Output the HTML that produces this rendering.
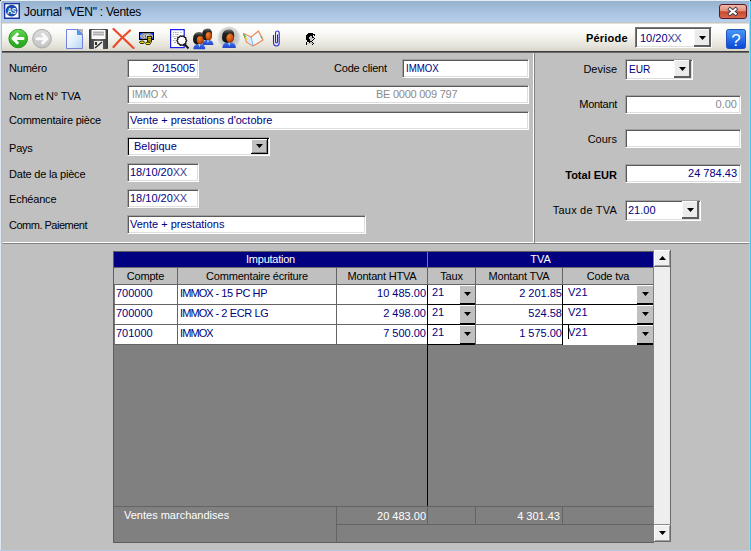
<!DOCTYPE html>
<html><head><meta charset="utf-8">
<style>
*{box-sizing:border-box;margin:0;padding:0}
html,body{width:751px;height:551px;overflow:hidden;background:#c0c0c0;font-family:"Liberation Sans",sans-serif;font-size:11px;color:#000}
.abs{position:absolute}
#win{position:absolute;left:0;top:0;width:751px;height:551px;background:#c0c0c0;overflow:hidden}
.lbl{position:absolute;white-space:nowrap;font-size:11px;line-height:13px;color:#000;letter-spacing:-0.2px}
.inp{position:absolute;background:#fff;border-top:1px solid #a0a0a0;border-left:1px solid #a0a0a0;border-bottom:1px solid #fff;border-right:1px solid #fff;box-shadow:inset 1px 1px 0 #5a5a5a,inset -1px -1px 0 #dedede;color:#000080;white-space:nowrap;overflow:hidden;font-size:11px;line-height:13px;padding:2px 3px 0 3px}
.inp span{position:relative}
.r{text-align:right}
.dis{color:#8a8a8a}
.cbd{position:absolute;background:#c0c0c0;border-right:1px solid #000;border-bottom:1px solid #000;box-shadow:inset 1px 1px 0 #fff,inset -1px -1px 0 #808080}
.cbl{position:absolute;background:#ebebeb;border-right:2px solid #5f5f5f;border-bottom:2px solid #5f5f5f;box-shadow:inset 1px 1px 0 #fafafa}
.arr{position:absolute;width:7px;height:4px;background:#000;clip-path:polygon(0 0,100% 0,50% 100%)}
.arrup{position:absolute;width:7px;height:4px;background:#000;clip-path:polygon(50% 0,100% 100%,0 100%)}
.cell{position:absolute;white-space:nowrap;overflow:hidden;font-size:11px;line-height:13px}
.sbtn{position:absolute;background:#f0f0f0;border-right:1px solid #6a6a6a;border-bottom:1px solid #6a6a6a;box-shadow:inset 1px 1px 0 #fff,inset -1px -1px 0 #a0a0a0}
</style></head><body>
<div id="win">
<div class="abs" style="left:0px;top:0px;width:751px;height:22px;background:linear-gradient(#94b0cc,#a8c2e0 55%,#b8d0ee);"></div>
<svg class="abs" style="left:4px;top:3px" width="16" height="16" viewBox="0 0 16 16">
  <rect x="0" y="0" width="16" height="16" fill="#1c34a4"/>
  <rect x="1.3" y="1.3" width="13.2" height="13.2" fill="#fff"/>
  <circle cx="7.6" cy="7.7" r="5.9" fill="#1a4aac"/>
  <g transform="translate(7.6,11) scale(0.72,1)"><text x="0" y="0" text-anchor="middle" font-size="9.5" font-family="Liberation Sans" font-weight="bold" fill="#fff" letter-spacing="-0.5">AS</text></g>
</svg>
<div class="abs" style="left:24px;top:5px;font-size:12px;line-height:14px;color:#000;white-space:nowrap;letter-spacing:-0.25px">Journal "VEN" : Ventes</div>
<div class="abs" style="left:719px;top:4px;width:28px;height:15px;border:1px solid #5a1820;border-radius:3px;background:linear-gradient(#f0b8a8,#e4907c 45%,#c8472c 52%,#d86a50)"></div>
<svg class="abs" style="left:726px;top:6px" width="14" height="11" viewBox="0 0 14 11"><path d="M4 3.2 L9.6 7.8 M9.6 3.2 L4 7.8" stroke="#3a3a4a" stroke-width="3.8" stroke-linecap="square"/><path d="M4 3.2 L9.6 7.8 M9.6 3.2 L4 7.8" stroke="#fff" stroke-width="2.1" stroke-linecap="square"/></svg>
<div class="abs" style="left:0px;top:22px;width:751px;height:1px;background:#c4c4c0;"></div>
<div class="abs" style="left:0px;top:23px;width:751px;height:1px;background:#e0e0dc;"></div>
<div class="abs" style="left:0px;top:24px;width:751px;height:27px;background:linear-gradient(#ffffff,#fbfbf8 30%,#e6e4da 80%,#d8d5ca);"></div>
<div class="abs" style="left:0px;top:51px;width:751px;height:1px;background:#3e3e3e;"></div>
<div class="abs" style="left:0px;top:52px;width:751px;height:1px;background:#6a6a6a;"></div>
<div class="abs" style="left:0px;top:0px;width:1px;height:551px;background:#dfe8f2;"></div>
<div class="abs" style="left:1px;top:0px;width:1px;height:551px;background:#a9c0da;"></div>
<div class="abs" style="left:749px;top:0px;width:1px;height:551px;background:#b9cde6;"></div>
<div class="abs" style="left:750px;top:0px;width:1px;height:551px;background:#3cc6ef;"></div>
<div class="abs" style="left:0px;top:550px;width:751px;height:1px;background:#b4cbe6;"></div>
<div class="abs" style="left:0px;top:0px;width:751px;height:1px;background:#e4ecf5;"></div>
<div class="abs" style="left:0px;top:0px;width:1px;height:1px;background:#303030;"></div>
<div class="abs" style="left:750px;top:0px;width:1px;height:1px;background:#000;"></div>
  <!-- toolbar icons -->
  <svg class="abs" style="left:8px;top:29px" width="21" height="20" viewBox="0 0 21 20">
    <defs><linearGradient id="gg" x1="0" y1="0" x2="0" y2="1"><stop offset="0" stop-color="#6cd85a"/><stop offset="0.5" stop-color="#3cb82c"/><stop offset="1" stop-color="#2aa020"/></linearGradient></defs>
    <circle cx="10.2" cy="9.5" r="9.3" fill="url(#gg)" stroke="#1b9a1b" stroke-width="1"/>
    <path d="M5 9.5 L9.3 5.2 M5 9.5 L9.3 13.8 M5.5 9.5 L15 9.5" stroke="#fff" stroke-width="3" stroke-linecap="round"/>
  </svg>
  <svg class="abs" style="left:32px;top:29px" width="21" height="20" viewBox="0 0 21 20">
    <defs><linearGradient id="gr" x1="0" y1="0" x2="0" y2="1"><stop offset="0" stop-color="#dcdcdc"/><stop offset="1" stop-color="#c4c4c4"/></linearGradient></defs>
    <circle cx="10" cy="9.7" r="9.3" fill="url(#gr)" stroke="#a8a8a8" stroke-width="1"/>
    <path d="M15 9.7 L10.7 5.4 M15 9.7 L10.7 14 M14.5 9.7 L5 9.7" stroke="#fafafa" stroke-width="3" stroke-linecap="round"/>
  </svg>
  <svg class="abs" style="left:66px;top:29px" width="18" height="21" viewBox="0 0 18 21">
    <defs><linearGradient id="dg" x1="0" y1="0" x2="1" y2="1"><stop offset="0" stop-color="#ffffff"/><stop offset="0.5" stop-color="#e4f0fc"/><stop offset="1" stop-color="#b4d4f4"/></linearGradient></defs>
    <rect x="11" y="0" width="6" height="6" fill="#b8b8b8"/>
    <path d="M0.5 0.5 H11.5 L16.5 5.5 V19.5 H0.5 Z" fill="url(#dg)" stroke="#7482dc"/>
    <path d="M11.5 0.5 V5.5 H16.5 Z" fill="#40a0f0" stroke="#7482dc"/>
  </svg>
  <svg class="abs" style="left:89px;top:29px" width="20" height="20" viewBox="0 0 20 20">
    <defs><linearGradient id="fg" x1="0" y1="0" x2="1" y2="0"><stop offset="0" stop-color="#3a3a3a"/><stop offset="0.5" stop-color="#6a6a6a"/><stop offset="1" stop-color="#3a3a3a"/></linearGradient></defs>
    <rect x="0" y="0" width="19" height="20" rx="1" fill="url(#fg)"/>
    <rect x="2.5" y="1" width="14" height="9" fill="#fafafa"/>
    <rect x="4" y="2.5" width="11" height="4" fill="#b0b0b0"/>
    <rect x="4" y="4" width="11" height="1" fill="#d0d0d0"/>
    <rect x="5" y="12" width="9" height="8" fill="#e8e8e8"/>
    <path d="M6 19 L13 13" stroke="#202020" stroke-width="1.2"/>
    <rect x="6" y="13" width="2" height="3" fill="#303030"/>
  </svg>
  <svg class="abs" style="left:112px;top:28px" width="23" height="21" viewBox="0 0 23 21">
    <path d="M1.5 1 Q10 9 21.5 20" stroke="#ea4a2a" stroke-width="2.2" fill="none" stroke-linecap="round"/>
    <path d="M18 2.5 Q9 10 1.5 19" stroke="#ea4a2a" stroke-width="2.2" fill="none" stroke-linecap="round"/>
  </svg>
  <svg class="abs" style="left:139px;top:32px" width="15" height="13" viewBox="0 0 15 13">
    <rect x="0.5" y="0.5" width="14" height="7" fill="#b0b0b0" stroke="#000"/>
    <path d="M1 1 h3.5 l-3.5 2.5z M14 1 h-3.5 l3.5 2.5z M1 7 h2.5 l-2.5 -2z M14 7 h-2.5 l2.5 -2z" fill="#1848ff"/>
    <ellipse cx="7.5" cy="4" rx="4" ry="2.6" fill="#cfcfcf" stroke="#606060" stroke-width="0.7"/>
    <path d="M7 2.5 Q5 4 7 5.5" stroke="#303030" stroke-width="0.8" fill="none"/>
    <rect x="8.5" y="4.5" width="4" height="5.5" fill="#f4e400" stroke="#000" stroke-width="0.8"/>
    <path d="M8.5 6.3 h4 M8.5 8.2 h4" stroke="#000" stroke-width="0.6"/>
    <ellipse cx="3" cy="10.3" rx="2.5" ry="1.3" fill="#f4e400" stroke="#000" stroke-width="0.8"/>
    <ellipse cx="9" cy="11.4" rx="2.5" ry="1.3" fill="#f4e400" stroke="#000" stroke-width="0.8"/>
  </svg>
  <svg class="abs" style="left:169px;top:29px" width="22" height="21" viewBox="0 0 22 21">
    <rect x="1.6" y="0.6" width="13.6" height="18" fill="#fff" stroke="#1c1cf0" stroke-width="1.2"/>
    <path d="M4 3.5h1 M6 3.5h1.5 M8.5 3.5h1 M11.5 3.5h1 M3.8 5.5h1 M6.5 5.5h1 M8 5.5h1.5 M3.8 7.5h1 M5.5 7.5h1 M7.5 7.5h1.5 M5 9.5h2.5 M3.8 11.5h1 M5.5 11.5h1 M5 13.5h2" stroke="#909090" stroke-width="0.9"/>
    <path d="M15 14.5 L19.5 19.5" stroke="#181818" stroke-width="1.9"/>
    <polygon points="17.70,11.60 16.79,12.90 16.76,14.48 15.27,15.00 14.31,16.26 12.80,15.80 11.29,16.26 10.33,15.00 8.84,14.48 8.81,12.90 7.90,11.60 8.81,10.30 8.84,8.72 10.33,8.20 11.29,6.94 12.80,7.40 14.31,6.94 15.27,8.20 16.76,8.72 16.79,10.30" fill="#fff" stroke="#111" stroke-width="1.3" stroke-linejoin="round"/>
  </svg>
  <svg class="abs" style="left:188px;top:25px" width="78" height="27" viewBox="188 25 78 27">
    <defs>
      <linearGradient id="bd" x1="0" y1="0" x2="0" y2="1"><stop offset="0" stop-color="#5a84ec"/><stop offset="0.5" stop-color="#3058e0"/><stop offset="1" stop-color="#2446c8"/></linearGradient>
      <radialGradient id="fc" cx="0.35" cy="0.3" r="0.8"><stop offset="0" stop-color="#f48030"/><stop offset="0.6" stop-color="#c85210"/><stop offset="1" stop-color="#882c04"/></radialGradient>
      <linearGradient id="hr" x1="0" y1="0" x2="0" y2="1"><stop offset="0" stop-color="#707070"/><stop offset="0.3" stop-color="#222"/><stop offset="1" stop-color="#101010"/></linearGradient>
      <radialGradient id="glow" cx="0.5" cy="0.5" r="0.5"><stop offset="0" stop-color="#b4b4b4"/><stop offset="0.7" stop-color="#c8c8c6"/><stop offset="0.9" stop-color="#dcdcd8"/><stop offset="1" stop-color="#eeede8" stop-opacity="0"/></radialGradient>
      
    </defs>
    <g transform="translate(202,28.4) scale(0.93,0.97)">
        <path d="M0.3 17.2 Q0.3 12 6.3 11.6 Q12.3 12 12.3 17.2 Z" fill="url(#bd)"/>
        <path d="M5.3 11.8 L6.4 15.5 L7.5 11.8 Z" fill="#a8e4fa"/>
        <path d="M0 7.5 Q0 0 6 0 Q10.8 0 10.8 5.5 L10.5 9 Q8 12.5 3.5 12.3 Q0 11.5 0 7.5 Z" fill="url(#hr)"/>
        <ellipse cx="7.2" cy="8" rx="3.4" ry="4.2" fill="url(#fc)"/>
      </g>
    <g transform="translate(193,32.1)">
        <path d="M0.3 17.2 Q0.3 12 6.3 11.6 Q12.3 12 12.3 17.2 Z" fill="url(#bd)"/>
        <path d="M5.3 11.8 L6.4 15.5 L7.5 11.8 Z" fill="#a8e4fa"/>
        <path d="M0 7.5 Q0 0 6 0 Q10.8 0 10.8 5.5 L10.5 9 Q8 12.5 3.5 12.3 Q0 11.5 0 7.5 Z" fill="url(#hr)"/>
        <ellipse cx="7.2" cy="8" rx="3.4" ry="4.2" fill="url(#fc)"/>
      </g>
    <circle cx="229" cy="38" r="12" fill="url(#glow)"/>
    <g transform="translate(222,29.5) scale(1.13,1.08)">
        <path d="M0.3 17.2 Q0.3 12 6.3 11.6 Q12.3 12 12.3 17.2 Z" fill="url(#bd)"/>
        <path d="M5.3 11.8 L6.4 15.5 L7.5 11.8 Z" fill="#a8e4fa"/>
        <path d="M0 7.5 Q0 0 6 0 Q10.8 0 10.8 5.5 L10.5 9 Q8 12.5 3.5 12.3 Q0 11.5 0 7.5 Z" fill="url(#hr)"/>
        <ellipse cx="7.2" cy="8" rx="3.4" ry="4.2" fill="url(#fc)"/>
      </g>
    <path d="M243.5 33.5 L251 37 L258.5 31 L263 40 L253 46 L246.5 42 Z" fill="#eef6fe" stroke="#f08a5a" stroke-width="1.3" stroke-linejoin="round"/>
    <path d="M251 37 L253 46" stroke="#78b0ec" stroke-width="1.2"/>
    <path d="M245 35.5 L251 38.5 L252.5 45 L247 41.5 Z" fill="#d4eafc"/>
    <path d="M244 34.5 L245.5 37.5" stroke="#40c040" stroke-width="1.6"/>
    <path d="M245.5 37.5 L246.5 40" stroke="#f0d020" stroke-width="1.6"/>
    <path d="M261 36 L262 38.5" stroke="#60c050" stroke-width="1.4"/>
  </svg>
  <svg class="abs" style="left:272px;top:30px" width="9" height="17" viewBox="0 0 9 17">
    <path d="M5.5 4.5 V11.5 Q5.5 13 4.5 13 Q3.5 13 3.5 11.5 V3 Q3.5 1 5.2 1 Q7.2 1 7.2 3 V12.5 Q7.2 16 4.5 16 Q1.5 16 1.5 12.5 V5" fill="none" stroke="#2424e0" stroke-width="1.1"/>
  </svg>
  <svg class="abs" style="left:306px;top:33px" width="9" height="12" viewBox="306 33 9 12" shape-rendering="crispEdges"><rect x="308" y="33" width="1" height="1" fill="#000"/><rect x="309" y="33" width="1" height="1" fill="#000"/><rect x="310" y="33" width="1" height="1" fill="#000"/><rect x="311" y="33" width="1" height="1" fill="#000"/><rect x="312" y="33" width="1" height="1" fill="#000"/><rect x="307" y="34" width="1" height="1" fill="#000"/><rect x="308" y="34" width="1" height="1" fill="#000"/><rect x="309" y="34" width="1" height="1" fill="#000"/><rect x="310" y="34" width="1" height="1" fill="#000"/><rect x="311" y="34" width="1" height="1" fill="#000"/><rect x="312" y="34" width="1" height="1" fill="#000"/><rect x="313" y="34" width="1" height="1" fill="#000"/><rect x="314" y="34" width="1" height="1" fill="#000"/><rect x="306" y="35" width="1" height="1" fill="#000"/><rect x="307" y="35" width="1" height="1" fill="#000"/><rect x="308" y="35" width="1" height="1" fill="#000"/><rect x="309" y="35" width="1" height="1" fill="#000"/><rect x="310" y="35" width="1" height="1" fill="#000"/><rect x="311" y="35" width="1" height="1" fill="#000"/><rect x="312" y="35" width="1" height="1" fill="#000"/><rect x="313" y="35" width="1" height="1" fill="#fff"/><rect x="314" y="35" width="1" height="1" fill="#000"/><rect x="306" y="36" width="1" height="1" fill="#000"/><rect x="307" y="36" width="1" height="1" fill="#000"/><rect x="308" y="36" width="1" height="1" fill="#000"/><rect x="309" y="36" width="1" height="1" fill="#000"/><rect x="310" y="36" width="1" height="1" fill="#c8c8c8"/><rect x="311" y="36" width="1" height="1" fill="#c8c8c8"/><rect x="312" y="36" width="1" height="1" fill="#000"/><rect x="306" y="37" width="1" height="1" fill="#000"/><rect x="307" y="37" width="1" height="1" fill="#000"/><rect x="308" y="37" width="1" height="1" fill="#000"/><rect x="309" y="37" width="1" height="1" fill="#c8c8c8"/><rect x="310" y="37" width="1" height="1" fill="#c8c8c8"/><rect x="311" y="37" width="1" height="1" fill="#c8c8c8"/><rect x="312" y="37" width="1" height="1" fill="#000"/><rect x="313" y="37" width="1" height="1" fill="#000"/><rect x="306" y="38" width="1" height="1" fill="#000"/><rect x="307" y="38" width="1" height="1" fill="#000"/><rect x="308" y="38" width="1" height="1" fill="#000"/><rect x="309" y="38" width="1" height="1" fill="#c8c8c8"/><rect x="310" y="38" width="1" height="1" fill="#c8c8c8"/><rect x="311" y="38" width="1" height="1" fill="#c8c8c8"/><rect x="312" y="38" width="1" height="1" fill="#c8c8c8"/><rect x="314" y="38" width="1" height="1" fill="#000"/><rect x="306" y="39" width="1" height="1" fill="#000"/><rect x="307" y="39" width="1" height="1" fill="#000"/><rect x="308" y="39" width="1" height="1" fill="#000"/><rect x="309" y="39" width="1" height="1" fill="#000"/><rect x="310" y="39" width="1" height="1" fill="#c8c8c8"/><rect x="311" y="39" width="1" height="1" fill="#c8c8c8"/><rect x="313" y="39" width="1" height="1" fill="#000"/><rect x="307" y="40" width="1" height="1" fill="#000"/><rect x="308" y="40" width="1" height="1" fill="#000"/><rect x="309" y="40" width="1" height="1" fill="#000"/><rect x="310" y="40" width="1" height="1" fill="#c8c8c8"/><rect x="311" y="40" width="1" height="1" fill="#c8c8c8"/><rect x="312" y="40" width="1" height="1" fill="#000"/><rect x="307" y="41" width="1" height="1" fill="#000"/><rect x="308" y="41" width="1" height="1" fill="#000"/><rect x="309" y="41" width="1" height="1" fill="#000"/><rect x="310" y="41" width="1" height="1" fill="#000"/><rect x="311" y="41" width="1" height="1" fill="#000"/><rect x="306" y="42" width="1" height="1" fill="#000"/><rect x="309" y="42" width="1" height="1" fill="#000"/><rect x="310" y="42" width="1" height="1" fill="#c8c8c8"/><rect x="311" y="42" width="1" height="1" fill="#c8c8c8"/><rect x="312" y="42" width="1" height="1" fill="#000"/><rect x="306" y="43" width="1" height="1" fill="#000"/><rect x="307" y="43" width="1" height="1" fill="#c8c8c8"/><rect x="308" y="43" width="1" height="1" fill="#c8c8c8"/><rect x="309" y="43" width="1" height="1" fill="#c8c8c8"/><rect x="310" y="43" width="1" height="1" fill="#c8c8c8"/><rect x="311" y="43" width="1" height="1" fill="#c8c8c8"/><rect x="312" y="43" width="1" height="1" fill="#c8c8c8"/><rect x="313" y="43" width="1" height="1" fill="#000"/><rect x="306" y="44" width="1" height="1" fill="#000"/><rect x="312" y="44" width="1" height="1" fill="#000"/></svg>
<div class="lbl" style="left:586px;top:32px;font-weight:bold;letter-spacing:0.2px">Période</div>
<div class="inp " style="left:635px;top:27px;width:77px;height:21px;padding-top:4px;padding-left:4px;border-top-color:#787878;border-left-color:#787878"><span style="">10/20<span style="color:#40409a;letter-spacing:-0.6px">XX</span></span></div>
<div class="cbl" style="left:694px;top:29px;width:17px;height:18px"><div class="arr" style="left:5px;top:7px"></div></div>
<svg class="abs" style="left:726px;top:29px" width="20" height="20" viewBox="0 0 20 20">
  <defs><linearGradient id="hg" x1="0" y1="0" x2="0" y2="1"><stop offset="0" stop-color="#4a98fa"/><stop offset="1" stop-color="#0648d6"/></linearGradient></defs>
  <rect x="0.5" y="0.5" width="19" height="19" rx="2" fill="url(#hg)" stroke="#2050b8"/>
  <text x="10" y="16.5" text-anchor="middle" font-size="17" font-family="Liberation Sans" fill="#fff">?</text>
</svg>
<div class="lbl" style="left:9px;top:62px;">Numéro</div>
<div class="inp r" style="left:127px;top:59px;width:72px;height:19px;"><span style="">2015005</span></div>
<div class="lbl" style="left:334px;top:62px;">Code client</div>
<div class="inp " style="left:402px;top:59px;width:127px;height:19px;padding-left:3px"><span style=""><span style="display:inline-block;transform:scaleX(0.88);transform-origin:0 0">IMMOX</span></span></div>
<div class="lbl" style="left:9px;top:90px;">Nom et N° TVA</div>
<div class="inp dis" style="left:127px;top:85px;width:402px;height:19px"><span style="display:inline-block;transform:scaleX(0.88);transform-origin:0 0;left:1px">IMMO X</span><span style="position:absolute;left:248px;top:2px;letter-spacing:-0.25px">BE 0000 009 797</span></div>
<div class="lbl" style="left:9px;top:114px;">Commentaire pièce</div>
<div class="inp " style="left:127px;top:111px;width:402px;height:19px;padding-left:2px"><span style="">Vente + prestations d'octobre</span></div>
<div class="lbl" style="left:9px;top:142px;">Pays</div>
<div class="inp" style="left:127px;top:137px;width:143px;height:19px;box-shadow:inset 1px 1px 0 #000,inset -1px -1px 0 #dedede;padding-left:6px;padding-top:2px">Belgique</div>
<div class="cbd" style="left:251px;top:139px;width:17px;height:15px"><div class="arr" style="left:5px;top:5px"></div></div>
<div class="lbl" style="left:9px;top:168px;">Date de la pièce</div>
<div class="inp " style="left:127px;top:163px;width:72px;height:19px;padding-left:2px;padding-top:2px"><span style="">18/10/20<span style="color:#40409a;letter-spacing:-0.3px">XX</span></span></div>
<div class="lbl" style="left:9px;top:193px;">Echéance</div>
<div class="inp " style="left:127px;top:189px;width:72px;height:19px;padding-left:2px;padding-top:2px"><span style="">18/10/20<span style="color:#40409a;letter-spacing:-0.3px">XX</span></span></div>
<div class="lbl" style="left:9px;top:219px;letter-spacing:-0.5px">Comm. Paiement</div>
<div class="inp " style="left:127px;top:215px;width:239px;height:19px;padding-left:2px;padding-top:2px"><span style="">Vente + prestations</span></div>
<div class="abs" style="left:533px;top:53px;width:1px;height:190px;background:#fff;"></div>
<div class="abs" style="left:534px;top:53px;width:1px;height:190px;background:#808080;"></div>
<div class="abs" style="left:3px;top:242px;width:530px;height:1px;background:#fff;"></div>
<div class="abs" style="left:535px;top:242px;width:214px;height:1px;background:#fff;"></div>
<div class="abs" style="left:3px;top:243px;width:746px;height:1px;background:#808080;"></div>
<div class="lbl" style="left:0px;top:63px;width:617px;text-align:right;letter-spacing:0">Devise</div>
<div class="inp " style="left:625px;top:59px;width:68px;height:21px;padding-top:3px;padding-left:3px"><span style=""><span style="display:inline-block;transform:scaleX(0.92);transform-origin:0 0">EUR</span></span></div>
<div class="cbl" style="left:674px;top:60px;width:17px;height:18px"><div class="arr" style="left:5px;top:7px"></div></div>
<div class="lbl" style="left:0px;top:98px;width:617px;text-align:right;letter-spacing:-0.3px">Montant</div>
<div class="inp r dis" style="left:625px;top:95px;width:116px;height:19px;padding-right:3px;padding-top:2px"><span style="">0.00</span></div>
<div class="lbl" style="left:0px;top:133px;width:617px;text-align:right;letter-spacing:0">Cours</div>
<div class="inp " style="left:625px;top:129px;width:116px;height:19px;"><span style=""></span></div>
<div class="lbl" style="left:0px;top:169px;width:617px;text-align:right;font-weight:bold;letter-spacing:0">Total EUR</div>
<div class="inp r" style="left:625px;top:164px;width:116px;height:19px;padding-right:3px;padding-top:2px"><span style="">24 784.43</span></div>
<div class="lbl" style="left:0px;top:204px;width:617px;text-align:right;letter-spacing:0.2px">Taux de TVA</div>
<div class="inp " style="left:625px;top:200px;width:76px;height:21px;padding-top:3px;padding-left:2px"><span style="">21.00</span></div>
<div class="cbl" style="left:682px;top:201px;width:17px;height:18px"><div class="arr" style="left:5px;top:7px"></div></div>
<div class="abs" style="left:113px;top:251px;width:541px;height:292px;background:#808080;border-top:1px solid #5e5e5e;border-left:1px solid #5e5e5e;border-bottom:1px solid #5e5e5e"></div>
<div class="abs" style="left:114px;top:252px;width:313px;height:15px;background:#000080;color:#fff;text-align:center;line-height:14px;letter-spacing:-0.25px">Imputation</div>
<div class="abs" style="left:427px;top:252px;width:1px;height:15px;background:#7a7a7a;"></div>
<div class="abs" style="left:428px;top:252px;width:225px;height:15px;background:#000080;color:#fff;text-align:center;line-height:14px">TVA</div>
<div class="abs" style="left:114px;top:267px;width:539px;height:1px;background:#686868;"></div>
<div class="abs" style="left:114px;top:268px;width:539px;height:16px;background:#c0c0c0;"></div>
<div class="abs" style="left:114px;top:284px;width:539px;height:1px;background:#646464;"></div>
<div class="cell" style="left:114px;top:270px;width:63px;text-align:center;letter-spacing:-0.2px">Compte</div>
<div class="cell" style="left:178px;top:270px;width:158px;text-align:center;letter-spacing:-0.2px">Commentaire écriture</div>
<div class="cell" style="left:337px;top:270px;width:90px;text-align:center;letter-spacing:-0.2px">Montant HTVA</div>
<div class="cell" style="left:428px;top:270px;width:47px;text-align:center;letter-spacing:-0.2px">Taux</div>
<div class="cell" style="left:476px;top:270px;width:86px;text-align:center;letter-spacing:-0.2px">Montant TVA</div>
<div class="cell" style="left:563px;top:270px;width:90px;text-align:center;letter-spacing:-0.2px">Code tva</div>
<div class="abs" style="left:177px;top:267px;width:1px;height:17px;background:#646464;"></div>
<div class="abs" style="left:336px;top:267px;width:1px;height:17px;background:#646464;"></div>
<div class="abs" style="left:427px;top:267px;width:1px;height:17px;background:#646464;"></div>
<div class="abs" style="left:475px;top:267px;width:1px;height:17px;background:#646464;"></div>
<div class="abs" style="left:562px;top:267px;width:1px;height:17px;background:#646464;"></div>
<div class="abs" style="left:114px;top:285px;width:539px;height:60px;background:#fff;"></div>
<div class="abs" style="left:114px;top:285px;width:1px;height:60px;background:#7a7a7a;"></div>
<div class="cell" style="left:116px;top:287px;color:#000080">700000</div>
<div class="cell" style="left:180px;top:287px;color:#000080"><span style="letter-spacing:-0.9px">IMMOX</span><span style="letter-spacing:-0.4px"> - 15 PC HP</span></div>
<div class="cell" style="left:337px;top:287px;width:89px;text-align:right;color:#000080">10 485.00</div>
<div class="cell" style="left:432px;top:286px;color:#000080">21</div>
<div class="cell" style="left:476px;top:287px;width:86px;text-align:right;color:#000080">2 201.85</div>
<div class="cell" style="left:568px;top:286px;color:#000080">V21</div>
<div class="abs" style="left:114px;top:304px;width:314px;height:1px;background:#646464;"></div>
<div class="abs" style="left:476px;top:304px;width:87px;height:1px;background:#646464;"></div>
<div class="abs" style="left:459px;top:285px;width:1px;height:18px;background:#fff;"></div>
<div class="abs" style="left:460px;top:285px;width:15px;height:1px;background:#fff;"></div>
<div class="abs" style="left:460px;top:286px;width:15px;height:17px;background:#c0c0c0;"></div>
<div class="arr" style="left:464px;top:292px"></div>
<div class="abs" style="left:428px;top:304px;width:48px;height:1px;background:#000;"></div>
<div class="abs" style="left:460px;top:303px;width:16px;height:1px;background:#000;"></div>
<div class="abs" style="left:475px;top:285px;width:1px;height:20px;background:#000;"></div>
<div class="abs" style="left:636px;top:285px;width:1px;height:18px;background:#fff;"></div>
<div class="abs" style="left:637px;top:285px;width:16px;height:1px;background:#fff;"></div>
<div class="abs" style="left:637px;top:286px;width:16px;height:17px;background:#c0c0c0;"></div>
<div class="arr" style="left:642px;top:292px"></div>
<div class="abs" style="left:637px;top:303px;width:16px;height:2px;background:#000;"></div>
<div class="cell" style="left:116px;top:307px;color:#000080">700000</div>
<div class="cell" style="left:180px;top:307px;color:#000080"><span style="letter-spacing:-0.9px">IMMOX</span><span style="letter-spacing:-0.4px"> - 2 ECR LG</span></div>
<div class="cell" style="left:337px;top:307px;width:89px;text-align:right;color:#000080">2 498.00</div>
<div class="cell" style="left:432px;top:306px;color:#000080">21</div>
<div class="cell" style="left:476px;top:307px;width:86px;text-align:right;color:#000080">524.58</div>
<div class="cell" style="left:568px;top:306px;color:#000080">V21</div>
<div class="abs" style="left:114px;top:324px;width:314px;height:1px;background:#646464;"></div>
<div class="abs" style="left:476px;top:324px;width:87px;height:1px;background:#646464;"></div>
<div class="abs" style="left:459px;top:305px;width:1px;height:18px;background:#fff;"></div>
<div class="abs" style="left:460px;top:305px;width:15px;height:1px;background:#fff;"></div>
<div class="abs" style="left:460px;top:306px;width:15px;height:17px;background:#c0c0c0;"></div>
<div class="arr" style="left:464px;top:312px"></div>
<div class="abs" style="left:428px;top:324px;width:48px;height:1px;background:#000;"></div>
<div class="abs" style="left:460px;top:323px;width:16px;height:1px;background:#000;"></div>
<div class="abs" style="left:475px;top:305px;width:1px;height:20px;background:#000;"></div>
<div class="abs" style="left:636px;top:305px;width:1px;height:18px;background:#fff;"></div>
<div class="abs" style="left:637px;top:305px;width:16px;height:1px;background:#fff;"></div>
<div class="abs" style="left:637px;top:306px;width:16px;height:17px;background:#c0c0c0;"></div>
<div class="arr" style="left:642px;top:312px"></div>
<div class="abs" style="left:637px;top:323px;width:16px;height:2px;background:#000;"></div>
<div class="cell" style="left:116px;top:327px;color:#000080">701000</div>
<div class="cell" style="left:180px;top:327px;color:#000080"><span style="letter-spacing:-0.9px">IMMOX</span><span style="letter-spacing:-0.4px"></span></div>
<div class="cell" style="left:337px;top:327px;width:89px;text-align:right;color:#000080">7 500.00</div>
<div class="cell" style="left:432px;top:326px;color:#000080">21</div>
<div class="cell" style="left:476px;top:327px;width:86px;text-align:right;color:#000080">1 575.00</div>
<div class="cell" style="left:568px;top:326px;color:#000080">V21</div>
<div class="abs" style="left:114px;top:344px;width:314px;height:1px;background:#646464;"></div>
<div class="abs" style="left:476px;top:344px;width:87px;height:1px;background:#646464;"></div>
<div class="abs" style="left:459px;top:325px;width:1px;height:18px;background:#fff;"></div>
<div class="abs" style="left:460px;top:325px;width:15px;height:1px;background:#fff;"></div>
<div class="abs" style="left:460px;top:326px;width:15px;height:17px;background:#c0c0c0;"></div>
<div class="arr" style="left:464px;top:332px"></div>
<div class="abs" style="left:428px;top:344px;width:48px;height:1px;background:#000;"></div>
<div class="abs" style="left:460px;top:343px;width:16px;height:1px;background:#000;"></div>
<div class="abs" style="left:475px;top:325px;width:1px;height:20px;background:#000;"></div>
<div class="abs" style="left:636px;top:325px;width:1px;height:18px;background:#fff;"></div>
<div class="abs" style="left:637px;top:325px;width:16px;height:1px;background:#fff;"></div>
<div class="abs" style="left:637px;top:326px;width:16px;height:17px;background:#c0c0c0;"></div>
<div class="arr" style="left:642px;top:332px"></div>
<div class="abs" style="left:637px;top:343px;width:16px;height:2px;background:#000;"></div>
<div class="abs" style="left:177px;top:285px;width:1px;height:60px;background:#646464;"></div>
<div class="abs" style="left:336px;top:285px;width:1px;height:60px;background:#646464;"></div>
<div class="abs" style="left:475px;top:285px;width:1px;height:60px;background:#646464;"></div>
<div class="abs" style="left:427px;top:285px;width:1px;height:221px;background:#000;"></div>
<div class="abs" style="left:562px;top:285px;width:1px;height:60px;background:#000;"></div>
<div class="abs" style="left:563px;top:304px;width:90px;height:1px;background:#000;"></div>
<div class="abs" style="left:563px;top:324px;width:90px;height:1px;background:#000;"></div>
<div class="abs" style="left:568px;top:325px;width:1px;height:14px;background:#000;"></div>
<div class="abs" style="left:114px;top:506px;width:539px;height:1px;background:#646464;"></div>
<div class="abs" style="left:337px;top:524px;width:316px;height:1px;background:#646464;"></div>
<div class="abs" style="left:336px;top:506px;width:1px;height:36px;background:#646464;"></div>
<div class="abs" style="left:427px;top:506px;width:1px;height:18px;background:#646464;"></div>
<div class="abs" style="left:475px;top:506px;width:1px;height:18px;background:#646464;"></div>
<div class="abs" style="left:562px;top:506px;width:1px;height:18px;background:#646464;"></div>
<div class="cell" style="left:124px;top:509px;color:#fff">Ventes marchandises</div>
<div class="cell" style="left:337px;top:510px;width:89px;text-align:right;color:#fff">20 483.00</div>
<div class="cell" style="left:476px;top:510px;width:84px;text-align:right;color:#fff">4 301.43</div>
<div class="abs" style="left:654px;top:267px;width:17px;height:258px;background:#eeeeee;border-right:1px solid #6a6a6a"></div>
<div class="sbtn" style="left:654px;top:250px;width:17px;height:17px"><div class="arrup" style="left:5px;top:6px"></div></div>
<div class="abs" style="left:654px;top:524px;width:17px;height:1px;background:#8a8a8a;"></div>
<div class="sbtn" style="left:654px;top:525px;width:17px;height:17px"><div class="arr" style="left:5px;top:6px"></div></div>
</div>
</body></html>
